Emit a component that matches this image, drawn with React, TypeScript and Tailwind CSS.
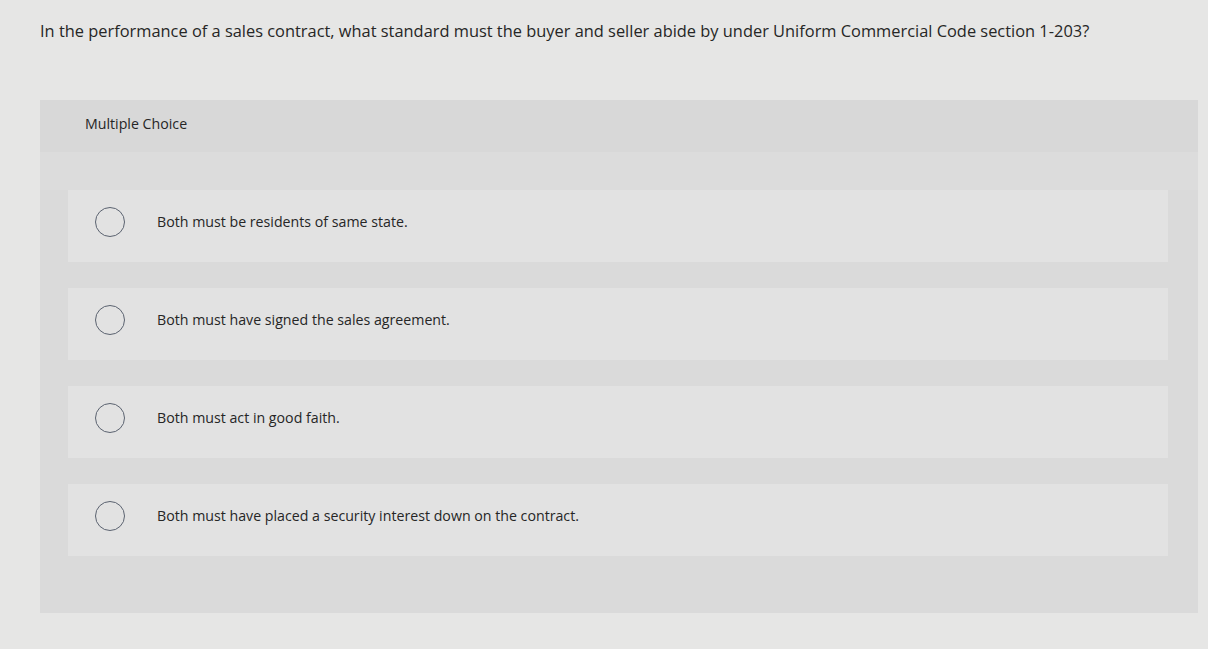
const options = [
  "Both must be residents of same state.",
  "Both must have signed the sales agreement.",
  "Both must act in good faith.",
  "Both must have placed a security interest down on the contract.",
];

export default function App() {
  return (
    <div className="h-[649px] w-[1208px] overflow-hidden bg-[#e6e6e5] font-['Open_Sans',sans-serif] text-[#262626]">
      <div className="pl-[40px] pt-[19px] text-[16.4px] leading-[24px]">
        In the performance of a sales contract, what standard must the buyer and seller abide by under Uniform Commercial Code section 1-203?
      </div>

      <div className="ml-[40px] mt-[57px] w-[1158px] bg-[#dadada] pb-[57px]">
        <div className="h-[52px] bg-[#d8d8d8] pl-[45px] pt-[13px] text-[14.2px]">Multiple Choice</div>
        <div className="h-[38px] bg-[#dcdcdc]" />
        <div className="flex flex-col gap-[26px] pl-[28px] pr-[30px]">
          {options.map((o) => (
            <div key={o} className="flex h-[72px] items-center bg-[#e2e2e2] pb-[8px]">
              <div className="ml-[27px] h-[30px] w-[30px] rounded-full border-[1.5px] border-[#5b6270]" />
              <div className="ml-[32px] text-[14.2px]">{o}</div>
            </div>
          ))}
        </div>
      </div>
    </div>
  );
}
